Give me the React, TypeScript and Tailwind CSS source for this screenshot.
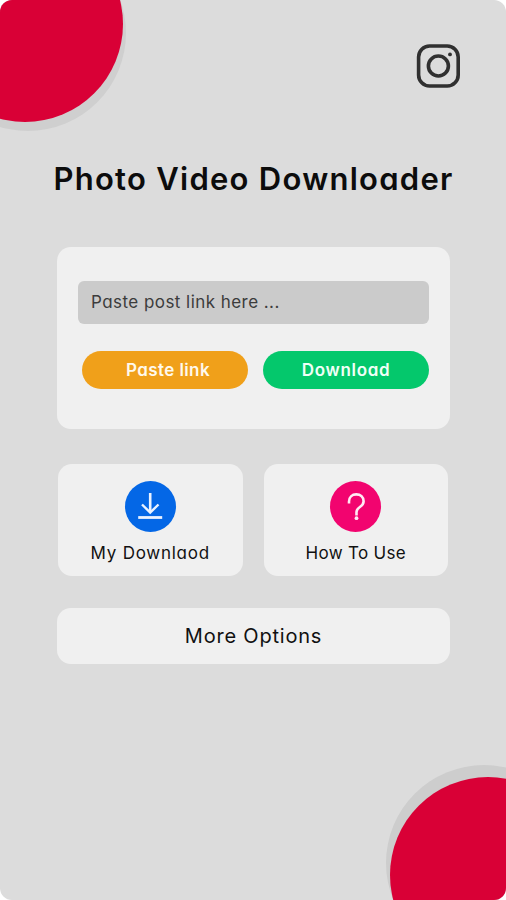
import { useState } from "react";

function InstagramIcon() {
  return (
    <svg width="44" height="44" viewBox="0 0 44 44" fill="none" stroke="#303030">
      <rect x="2.6" y="2" width="39.6" height="40" rx="11" strokeWidth="3.6" />
      <circle cx="22.4" cy="22" r="10" strokeWidth="3.6" />
      <circle cx="34" cy="10.4" r="1.9" fill="#303030" stroke="none" />
    </svg>
  );
}

function DownloadIcon() {
  return (
    <svg width="51" height="51" viewBox="0 0 51 51" fill="none" stroke="#eaf2ff">
      <path d="M25.2 12V31" strokeWidth="2.6" />
      <path d="M17 23.5L25.2 31.5L33.5 23.5" strokeWidth="2.4" />
      <path d="M13.2 36.5H37.2" strokeWidth="2.8" />
    </svg>
  );
}

function QuestionIcon() {
  return (
    <svg width="51" height="51" viewBox="0 0 51 51" fill="none" stroke="#ffeaf4">
      <path
        d="M19 22.5V20.5C19 16.2 22 13.4 26.3 13.4C30.5 13.4 33.6 16.2 33.6 20.3C33.6 26.5 26.5 25.5 26.5 31V34.5"
        strokeWidth="2.6"
      />
      <circle cx="26.5" cy="37.2" r="1.9" fill="#ffeaf4" stroke="none" />
    </svg>
  );
}

export default function App() {
  const [link, setLink] = useState("");

  return (
    <div className="h-[900px] w-[506px] bg-white">
      <div className="relative h-full overflow-hidden rounded-[12px] bg-[#dcdcdc] font-['Inter',sans-serif] text-[#111] [font-feature-settings:'cv11']">
        {/* corner decorations */}
        <div className="absolute -left-[70px] -top-[65px] size-[196px] rounded-full bg-[#cfcfcf]" />
        <div className="absolute -left-[73px] -top-[74px] size-[196px] rounded-full bg-[#d90036]" />
        <div className="absolute -bottom-[61px] -right-[76px] size-[196px] rounded-full bg-[#cdcdcd]" />
        <div className="absolute -bottom-[73px] -right-[80px] size-[196px] rounded-full bg-[#d90036]" />

        <div className="relative flex flex-col pl-[57px] pr-14">
          <header className="-mr-[10px] flex h-[88px] items-end justify-end">
            <InstagramIcon />
          </header>

          <h1 className="-mx-6 mt-[71px] whitespace-nowrap text-center text-[31px] font-semibold leading-10 tracking-[1.27px] text-[#0c0c0c]">
            Photo Video Downloader
          </h1>

          <section className="mt-12 h-[182px] rounded-[14px] bg-[#f0f0f0] px-[21px] pt-[34px]">
            <input
              type="text"
              value={link}
              onChange={(e) => setLink(e.target.value)}
              placeholder="Paste post link here ..."
              className="block h-[43px] w-full rounded-md bg-[#cbcbcb] px-[13px] pb-[2px] text-[17px] tracking-[0.45px] outline-none placeholder:text-[#3c3c3c]"
            />
            <div className="mt-[27px] flex gap-[15px] pl-1">
              <button className="h-[38px] w-[166px] rounded-full bg-[#f0a01a] pl-1.5 pt-0.5 text-[17px] font-semibold tracking-[0.4px] text-[#fff9ec]">
                Paste link
              </button>
              <button className="h-[38px] w-[166px] rounded-full bg-[#04c86c] pt-px text-[17px] font-semibold tracking-[0.7px] text-[#f0fff7]">
                Download
              </button>
            </div>
          </section>

          <div className="mt-[35px] flex gap-[21px] pl-px pr-0.5">
            <button className="flex h-[112px] flex-1 flex-col items-center rounded-[14px] bg-[#f0f0f0] pt-[17px]">
              <span className="rounded-full bg-[#0467e6]">
                <DownloadIcon />
              </span>
              <span className="mt-[9px] text-[17px] leading-6 tracking-[0.75px]">My Downlaod</span>
            </button>
            <button className="flex h-[112px] flex-1 flex-col items-center rounded-[14px] bg-[#f0f0f0] pt-[17px]">
              <span className="rounded-full bg-[#f2046f]">
                <QuestionIcon />
              </span>
              <span className="mt-[9px] text-[17px] leading-6 tracking-[0.3px]">How To Use</span>
            </button>
          </div>

          <button className="mt-8 h-14 rounded-[14px] bg-[#f0f0f0] text-[20px] tracking-[0.8px]">
            More Options
          </button>
        </div>
      </div>
    </div>
  );
}
